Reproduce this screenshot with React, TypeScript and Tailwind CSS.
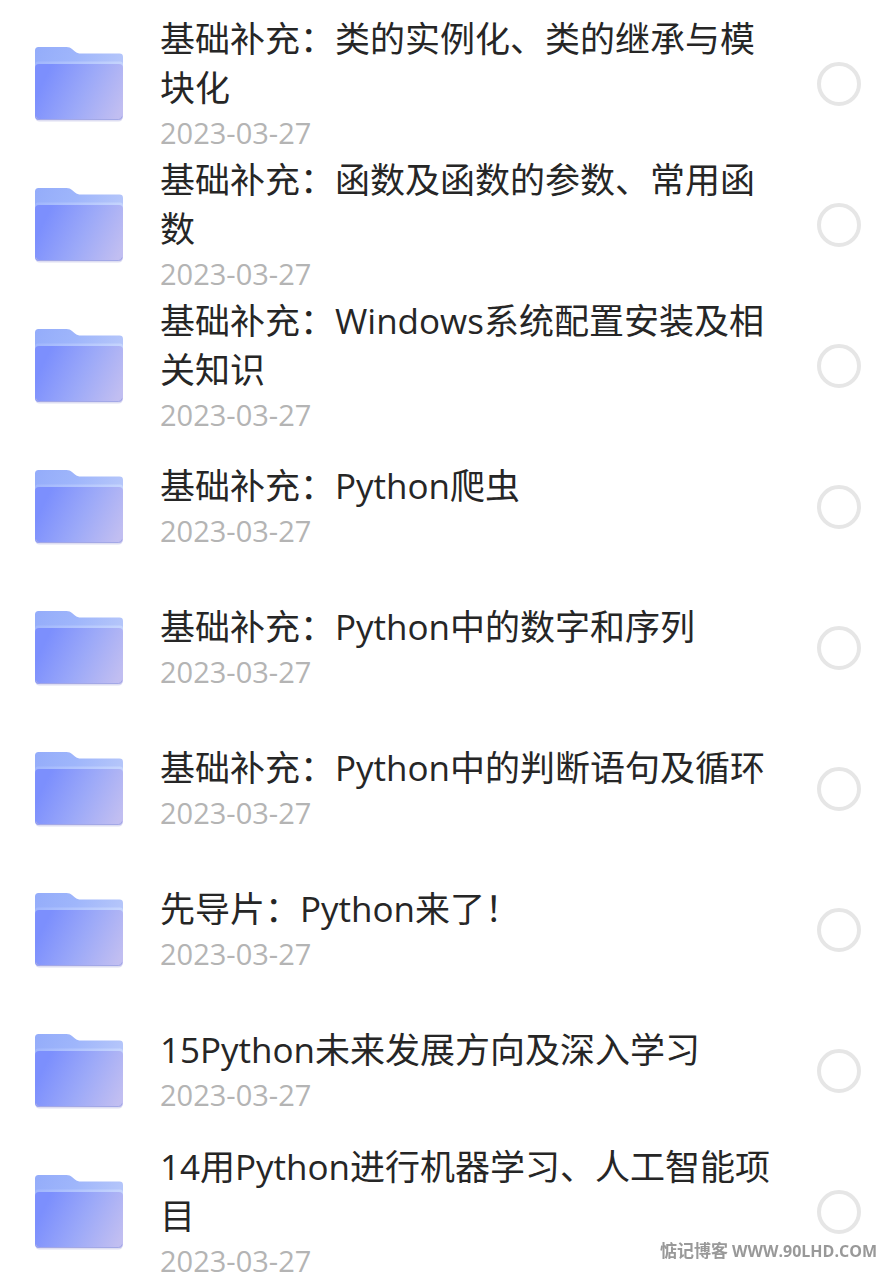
import React, { useState } from 'react';

interface Folder {
  name: string;
  date: string;
}

const folders: Folder[] = [
  { name: '基础补充：类的实例化、类的继承与模块化', date: '2023-03-27' },
  { name: '基础补充：函数及函数的参数、常用函数', date: '2023-03-27' },
  { name: '基础补充：Windows系统配置安装及相关知识', date: '2023-03-27' },
  { name: '基础补充：Python爬虫', date: '2023-03-27' },
  { name: '基础补充：Python中的数字和序列', date: '2023-03-27' },
  { name: '基础补充：Python中的判断语句及循环', date: '2023-03-27' },
  { name: '先导片：Python来了！', date: '2023-03-27' },
  { name: '15Python未来发展方向及深入学习', date: '2023-03-27' },
  { name: '14用Python进行机器学习、人工智能项目', date: '2023-03-27' },
];

function FolderIcon() {
  return (
    <svg viewBox="0 0 90 76" className="w-[90px] h-[76px] shrink-0" aria-hidden="true">
      <defs>
        <linearGradient id="folder-back" x1="0" y1="0" x2="1" y2="0.2">
          <stop offset="0" stopColor="#94acfa" />
          <stop offset="0.5" stopColor="#9fb6fb" />
          <stop offset="1" stopColor="#b4c5fa" />
        </linearGradient>
        <linearGradient id="folder-front" gradientUnits="userSpaceOnUse" x1="12" y1="30" x2="86" y2="66">
          <stop offset="0" stopColor="#7c8ffd" />
          <stop offset="0.5" stopColor="#9ca9f8" />
          <stop offset="1" stopColor="#c1bef1" />
        </linearGradient>
        <linearGradient id="folder-edge" x1="0" y1="0" x2="1" y2="0">
          <stop offset="0" stopColor="#a0b6fd" />
          <stop offset="1" stopColor="#c6d5fd" />
        </linearGradient>
      </defs>
      <rect x="1.5" y="20" width="87" height="55.5" rx="4" fill="#dedef2" />
      <path
        d="M4.500 1H32.500C35 1 36.500 1.800 38.300 3.300L41 5.500C42.800 7 44.500 7.600 47 7.600H85.500Q89 7.600 89 11V40H1V4.500Q1 1 4.500 1Z"
        fill="url(#folder-back)"
      />
      <rect x="1" y="15.5" width="88" height="20" rx="3" fill="url(#folder-edge)" />
      <rect x="1" y="18" width="88" height="56" rx="4" fill="url(#folder-front)" />
      <path d="M2 70.500Q2.500 73.500 5.500 73.500H84.500Q87.500 73.500 88 70.500" fill="none" stroke="#a3a8e6" strokeWidth="1" />
    </svg>
  );
}

export default function App() {
  const [selected, setSelected] = useState<string[]>([]);

  const toggle = (name: string) => {
    setSelected((prev) => (prev.includes(name) ? prev.filter((n) => n !== name) : [...prev, name]));
  };

  return (
    <main
      lang="zh-CN"
      className="h-screen overflow-y-auto [scrollbar-width:none] bg-white font-['Open_Sans','Noto_Sans_CJK_SC',sans-serif]"
    >
      <ul className="pt-[13px]">
        {folders.map((folder, index) => (
          <li key={folder.name}>
            <label
              htmlFor={`folder-${index}`}
              className="flex items-center min-h-[141px] pl-[34px] pr-[35px] gap-9 cursor-pointer"
            >
              <FolderIcon />
              <div className="flex-1 min-w-0">
                <p className="text-[35px] leading-[49px] text-[#262626]">{folder.name}</p>
                <p className="text-[29px] leading-[42px] text-[#b4b4b4]">{folder.date}</p>
              </div>
              <input
                id={`folder-${index}`}
                type="checkbox"
                checked={selected.includes(folder.name)}
                onChange={() => toggle(folder.name)}
                className="appearance-none shrink-0 size-11 rounded-full border-4 border-[#e6e6e6] checked:border-[#7a8dfd] checked:bg-[#7a8dfd]"
              />
            </label>
          </li>
        ))}
      </ul>

      {/* Watermark */}
      <div className="fixed right-[19px] bottom-[17px] flex items-center gap-1 leading-6 font-bold text-[#999999]">
        <span className="text-[17px]">惦记博客</span>
        <span className="text-[16px]">WWW.90LHD.COM</span>
      </div>
    </main>
  );
}
